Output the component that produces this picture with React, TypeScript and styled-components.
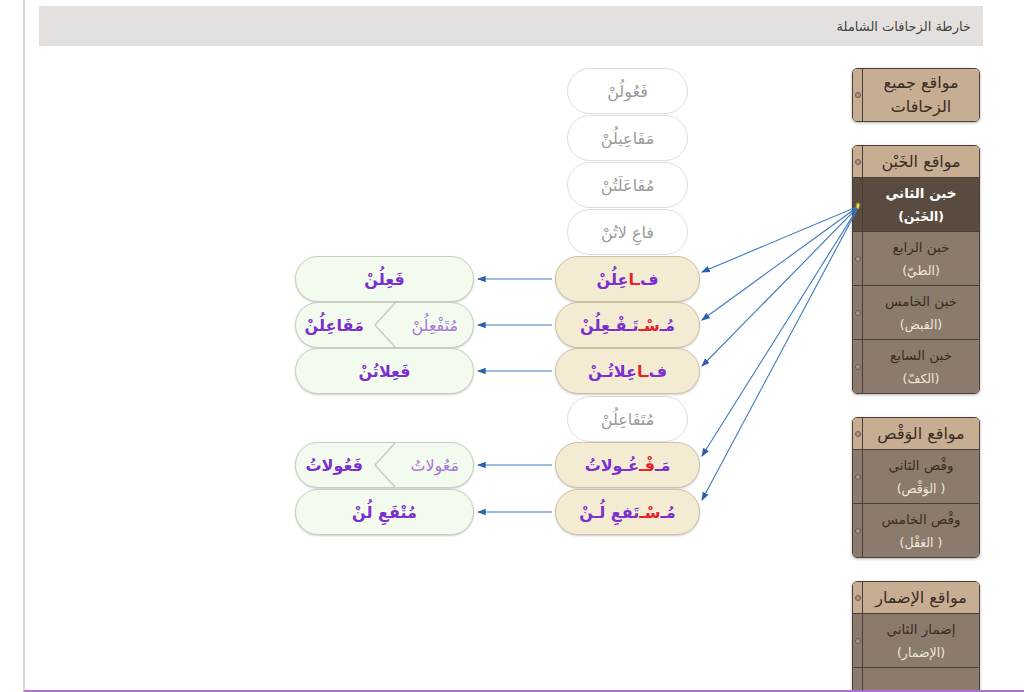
import React from 'react'
import styled, { createGlobalStyle } from 'styled-components'

const Global = createGlobalStyle`
	body { margin: 0; background: #fff; font-family: "DejaVu Sans", sans-serif; }
`

const Page = styled.div`
	height: 692px;
	overflow: hidden;
	box-sizing: border-box;
	border-left: 2px solid #d8d8d8;
	border-bottom: 2px solid #b070d0;
	margin-left: 23px;
	width: 1001px;
	position: relative;
`

const TitleBar = styled.div`
	margin: 6px 0 0 14px;
	width: 944px;
	height: 40px;
	background: #e4e0dd;
	direction: rtl;
	display: flex;
	align-items: center;
	padding-right: 12px;
	box-sizing: border-box;
	font-size: 13px;
	color: #444;
`

const Body = styled.div`
	display: flex;
	margin-left: 14px;
	width: 944px;
`

const Canvas = styled.div`
	position: relative;
	flex: 1;
	height: 640px;
`

const Sidebar = styled.div`
	width: 128px;
	margin-right: 3px;
	display: flex;
	flex-direction: column;
	gap: 23px;
	padding-top: 22px;
`

const Panel = styled.div`
	border: 1.5px solid #4a3e35;
	border-radius: 5px;
	overflow: hidden;
	box-shadow: 0 1px 3px rgba(0, 0, 0, 0.3);
	direction: ltr;
`

const Row = styled.div<{ $kind: 'head' | 'item' | 'active'; $h: number }>`
	display: flex;
	height: ${(p) => p.$h}px;
	background: ${(p) => (p.$kind === 'head' ? '#c7ad92' : p.$kind === 'active' ? '#5a4b40' : '#8b7b6d')};
	border-top: 1px solid #4a3e35;
	&:first-child { border-top: none; }
`

const Strip = styled.div`
	width: 9px;
	border-right: 1px solid #4a3e35;
	display: flex;
	align-items: center;
	justify-content: center;
	&::after {
		content: '';
		width: 4px;
		height: 4px;
		border-radius: 50%;
		background: #a89888;
		border: 1px solid #6a5a4c;
	}
`

const RowText = styled.div<{ $kind: 'head' | 'item' | 'active' }>`
	flex: 1;
	direction: rtl;
	display: flex;
	flex-direction: column;
	align-items: center;
	justify-content: center;
	text-align: center;
	font-size: ${(p) => (p.$kind === 'head' ? '16px' : '13.5px')};
	line-height: ${(p) => (p.$kind === 'head' ? '24px' : '24px')};
	color: ${(p) => (p.$kind === 'head' ? '#3a2e25' : p.$kind === 'active' ? '#fff' : '#3a2e25')};
	font-weight: ${(p) => (p.$kind === 'active' ? 'bold' : 'normal')};
`

const Sub = styled.span<{ $active?: boolean }>`
	font-size: 12.5px;
	color: ${(p) => (p.$active ? '#fff' : '#efe6dc')};
`

const Pill = styled.div<{ $kind: 'ghost' | 'base' | 'green' }>`
	position: absolute;
	box-sizing: border-box;
	height: 46px;
	border-radius: 23px;
	display: flex;
	align-items: center;
	justify-content: center;
	direction: rtl;
	font-size: 16px;
	border: 1.5px solid ${(p) => (p.$kind === 'ghost' ? '#ddd' : p.$kind === 'base' ? '#cfc2a8' : '#c9cdc2')};
	background: ${(p) => (p.$kind === 'ghost' ? '#fff' : p.$kind === 'base' ? '#f4ebd3' : '#f3fbee')};
	color: ${(p) => (p.$kind === 'ghost' ? '#9a9a9a' : '#7b2fd0')};
	font-weight: ${(p) => (p.$kind === 'ghost' ? 'normal' : 'bold')};
	box-shadow: ${(p) => (p.$kind === 'ghost' ? 'none' : '0 1px 2px rgba(0,0,0,0.2)')};
`

const Red = styled.span`
	color: #e8202a;
`

const Half = styled.span<{ $light?: boolean }>`
	flex: 1;
	text-align: center;
	color: ${(p) => (p.$light ? '#a878d8' : '#7b2fd0')};
	font-weight: ${(p) => (p.$light ? 'normal' : 'bold')};
`

const Chevron = styled.svg`
	width: 24px;
	height: 44px;
	flex: none;
`

const Wires = styled.svg`
	position: absolute;
	left: 0;
	top: 0;
	pointer-events: none;
`

// canvas origin = page x 37, y 46
const ox = 37
const oy = 46

const ghosts = [
	{ y: 68, t: 'فَعُولُنْ' },
	{ y: 115, t: 'مَفَاعِيلُنْ' },
	{ y: 162, t: 'مُفَاعَلَتُنْ' },
	{ y: 209, t: 'فاعِ لاتُنْ' },
	{ y: 396, t: 'مُتَفَاعِلُنْ' },
]

const bases: { y: number; node: React.ReactNode }[] = [
	{ y: 256, node: <>ف<Red>ـا</Red>عِلُنْ</> },
	{ y: 302, node: <>مُـ<Red>سْـ</Red>تَـفْـعِلُنْ</> },
	{ y: 348, node: <>ف<Red>ـا</Red>عِلاتُـنْ</> },
	{ y: 442, node: <>مَـ<Red>فْـ</Red>عُـولاتُ</> },
	{ y: 489, node: <>مُـ<Red>سْـ</Red>تَفعِ لُـنْ</> },
]

const greens: { y: number; a: string; b?: string }[] = [
	{ y: 256, a: 'فَعِلُنْ' },
	{ y: 302, a: 'مَفَاعِلُنْ', b: 'مُتَفْعِلُنْ' },
	{ y: 348, a: 'فَعِلاتُنْ' },
	{ y: 442, a: 'فَعُولاتُ', b: 'مَعُولاتُ' },
	{ y: 489, a: 'مُتْفَعِ لُنْ' },
]

const sidePanels = [
	{ head: 'مواقع جميع الزحافات', h: 52, items: [] as { t: string; s: string }[] },
	{
		head: 'مواقع الخَبْن',
		h: 31,
		items: [
			{ t: 'خبن الثاني', s: '(الخَبْن)' },
			{ t: 'خبن الرابع', s: '(الطيّ)' },
			{ t: 'خبن الخامس', s: '(القبض)' },
			{ t: 'خبن السابع', s: '(الكفّ)' },
		],
	},
	{
		head: 'مواقع الوَقْص',
		h: 31,
		items: [
			{ t: 'وقْص الثاني', s: '( الوَقْص)' },
			{ t: 'وقْص الخامس', s: '( العَقْل)' },
		],
	},
	{
		head: 'مواقع الإضمار',
		h: 31,
		items: [
			{ t: 'إضمار الثاني', s: '(الإضمار)' },
			{ t: 'إضمار الخامس', s: '' },
		],
	},
]

const App = () => {
	const src = { x: 857 - ox, y: 206 - oy }
	return (
		<Page>
			<Global />
			<TitleBar>خارطة الزحافات الشاملة</TitleBar>
			<Body>
				<Canvas>
					<Wires width={820} height={640}>
						<defs>
							<marker id="ah" markerWidth="8" markerHeight="8" refX="7" refY="4" orient="auto">
								<path d="M0,1 L8,4 L0,7 z" fill="#2a62a8" />
							</marker>
						</defs>
						{[272, 320, 366, 456, 500].map((y) => (
							<line key={y} x1={src.x} y1={src.y} x2={700 - ox} y2={y - oy} stroke="#3b78c0" strokeWidth={1.1} markerEnd="url(#ah)" />
						))}
						{[279, 325, 371, 465, 512].map((y) => (
							<line key={y} x1={550 - ox} y1={y - oy} x2={476 - ox} y2={y - oy} stroke="#3b78c0" strokeWidth={1.1} markerEnd="url(#ah)" />
						))}
						<circle cx={src.x} cy={src.y} r={3} fill="#e8d830" stroke="#7a6a20" strokeWidth={0.6} />
					</Wires>
					{ghosts.map((g) => (
						<Pill key={g.y} $kind="ghost" style={{ left: 565 - ox, top: g.y - oy, width: 121 }}>
							{g.t}
						</Pill>
					))}
					{bases.map((b) => (
						<Pill key={b.y} $kind="base" style={{ left: 553 - ox, top: b.y - oy, width: 145 }}>
							{b.node}
						</Pill>
					))}
					{greens.map((g) => (
						<Pill key={g.y} $kind="green" style={{ left: 293 - ox, top: g.y - oy, width: 179 }}>
							{g.b ? (
								<>
									<Half $light>{g.b}</Half>
									<Chevron viewBox="0 0 24 44">
										<path d="M22 0 L2 22 L22 44" fill="none" stroke="#c9cdc2" strokeWidth={1.5} />
									</Chevron>
									<Half>{g.a}</Half>
								</>
							) : (
								g.a
							)}
						</Pill>
					))}
				</Canvas>
				<Sidebar>
					{sidePanels.map((p) => (
						<Panel key={p.head}>
							<Row $kind="head" $h={p.h}>
								<Strip />
								<RowText $kind="head">{p.head}</RowText>
							</Row>
							{p.items.map((it, i) => {
								const kind = p.head === 'مواقع الخَبْن' && i === 0 ? 'active' : 'item'
								return (
									<Row key={it.t} $kind={kind} $h={53}>
										<Strip />
										<RowText $kind={kind}>
											<span>{it.t}</span>
											{it.s && <Sub $active={kind === 'active'}>{it.s}</Sub>}
										</RowText>
									</Row>
								)
							})}
						</Panel>
					))}
				</Sidebar>
			</Body>
		</Page>
	)
}

export default App
